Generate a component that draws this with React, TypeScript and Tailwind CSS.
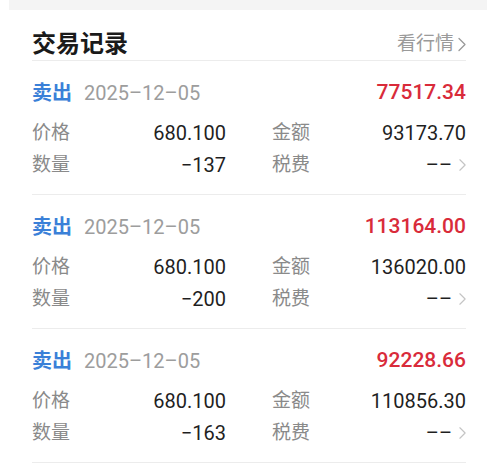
import React from "react";

type Trade = {
  date: string;
  profit: string;
  price: string;
  amount: string;
  qty: string;
};

const TRADES: Trade[] = [
  { date: "2025–12–05", profit: "77517.34", price: "680.100", amount: "93173.70", qty: "−137" },
  { date: "2025–12–05", profit: "113164.00", price: "680.100", amount: "136020.00", qty: "−200" },
  { date: "2025–12–05", profit: "92228.66", price: "680.100", amount: "110856.30", qty: "−163" },
];

function Chevron({ className }: { className?: string }) {
  return (
    <svg viewBox="0 0 8 14" className={className} fill="none" stroke="currentColor" strokeWidth="1.3">
      <path d="M1 1l6 6-6 6" strokeLinecap="round" strokeLinejoin="round" />
    </svg>
  );
}

function Cell({ label, children }: { label: string; children: React.ReactNode }) {
  return (
    <div className="flex items-center justify-between h-[28px]">
      <span className="text-[19px] text-[#8a8a8a]">{label}</span>
      {children}
    </div>
  );
}

export default function App() {
  return (
    <div
      className="w-[496px] h-[472px] bg-white overflow-hidden"
      style={{ fontFamily: 'Roboto, "Noto Sans CJK SC", sans-serif' }}
    >
      {/* strip from the section above */}
      <div className="mx-[9px] h-[10px] bg-[#f4f4f4]" />

      <div className="pl-[32px] pr-[30px]">
        {/* Header */}
        <div className="pt-[18px] border-b border-[#ececec]">
          <div className="h-[32px] flex items-center justify-between">
            <h2 className="text-[24px] font-bold text-[#1a1a1a]">交易记录</h2>
            <div className="flex items-center gap-[4px] text-[#9a9a9a]">
              <span className="text-[19px]">看行情</span>
              <Chevron className="w-[8px] h-[15px]" />
            </div>
          </div>
        </div>

        {/* Records */}
        {TRADES.map((t, i) => (
          <div key={i} className="pt-[16px] pb-[15px] border-b border-[#ececec]">
            <div className="h-[32px] flex items-center justify-between">
              <div className="flex items-center gap-[12px]">
                <span className="text-[20px] font-bold text-[#3a80d8]">卖出</span>
                <span className="text-[20px] text-[#9d9d9d]">{t.date}</span>
              </div>
              <span className="text-[21px] font-medium text-[#d92b3a]">{t.profit}</span>
            </div>
            <div className="grid grid-cols-2 gap-x-[46px] mt-[10px]">
              <Cell label="价格">
                <span className="text-[20px] text-[#1f1f1f]">{t.price}</span>
              </Cell>
              <Cell label="金额">
                <span className="text-[20px] text-[#1f1f1f]">{t.amount}</span>
              </Cell>
            </div>
            <div className="grid grid-cols-2 gap-x-[46px] mt-[4px]">
              <Cell label="数量">
                <span className="text-[20px] text-[#1f1f1f]">{t.qty}</span>
              </Cell>
              <Cell label="税费">
                <div className="flex items-center gap-[7px]">
                  <span className="text-[20px] text-[#1f1f1f]">––</span>
                  <Chevron className="w-[7px] h-[14px] text-[#c4c4c4]" />
                </div>
              </Cell>
            </div>
          </div>
        ))}
      </div>
    </div>
  );
}
